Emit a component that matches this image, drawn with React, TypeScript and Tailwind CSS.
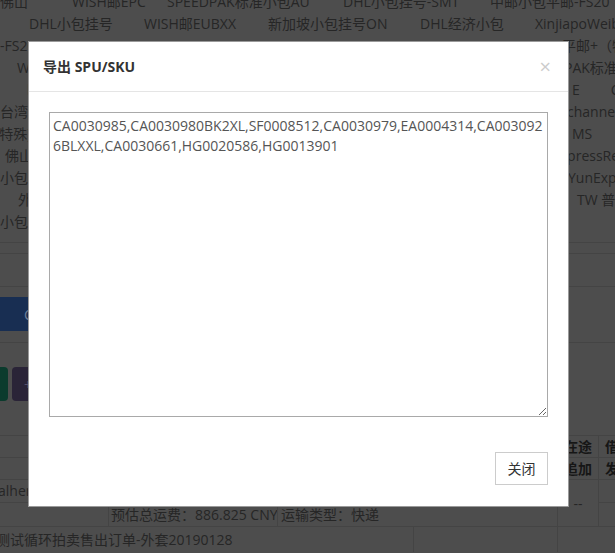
const skuList =
  "CA0030985,CA0030980BK2XL,SF0008512,CA0030979,EA0004314,CA0030926BLXXL,CA0030661,HG0020586,HG0013901";

function ChannelRows() {
  return (
    <div className="-mt-[9px] text-[14px] leading-[22px] whitespace-nowrap">
      <div className="flex h-[22px]">
        <span className="-ml-[28px] w-[100px] shrink-0">中邮佛山</span>
        <span className="w-[95px] shrink-0">WISH邮EPC</span>
        <span className="w-[176px] shrink-0">SPEEDPAK标准小包AU</span>
        <span className="w-[147px] shrink-0">DHL小包挂号-SMT</span>
        <span className="shrink-0">中邮小包平邮-FS20</span>
      </div>
      <div className="flex h-[22px] pl-[29px]">
        <span className="w-[115px] shrink-0">DHL小包挂号</span>
        <span className="w-[124px] shrink-0">WISH邮EUBXX</span>
        <span className="w-[152px] shrink-0">新加坡小包挂号ON</span>
        <span className="w-[115px] shrink-0">DHL经济小包</span>
        <span className="shrink-0">XinjiapoWeibao</span>
      </div>
      <div className="grid h-[22px] grid-cols-[560px_1fr]">
        <span className="-ml-[84px]">中邮小包平邮-FS20</span>
        <span className="ml-[2px]">平邮+（特殊）</span>
      </div>
      <div className="grid h-[22px] grid-cols-[560px_1fr]">
        <span className="ml-[17px]">WISH邮EUB</span>
        <span className="ml-[4px]">PAK标准小包</span>
      </div>
      <div className="grid h-[22px] grid-cols-[560px_1fr]">
        <span className="ml-[27px]">l</span>
        <span className="ml-[12px] flex gap-[31px]">
          <span className="shrink-0">E</span>
          <span className="shrink-0">CNE</span>
        </span>
      </div>
      <div className="grid h-[22px] grid-cols-[560px_1fr]">
        <span>台湾小包</span>
        <span className="ml-[7px]">channel</span>
      </div>
      <div className="grid h-[22px] grid-cols-[560px_1fr]">
        <span className="-ml-[5px]">(特殊)</span>
        <span className="ml-[12px]">MS</span>
      </div>
      <div className="grid h-[22px] grid-cols-[560px_1fr]">
        <span className="ml-[5px]">佛山</span>
        <span className="-ml-[8px]">ExpressReg</span>
      </div>
      <div className="grid h-[22px] grid-cols-[560px_1fr]">
        <span>小包</span>
        <span className="ml-[8px]">YunExpress</span>
      </div>
      <div className="grid h-[22px] grid-cols-[560px_1fr]">
        <span className="ml-[18px]">外</span>
        <span className="ml-[17px]">TW 普通</span>
      </div>
      <div className="flex h-[22px]">
        <span>小包</span>
      </div>
    </div>
  );
}

function OrderTable() {
  return (
    <div className="text-[14px] whitespace-nowrap">
      <div className="flex h-[22px] border-t border-[#444]">
        <div className="w-[557px] shrink-0" />
        <div className="flex w-[41px] shrink-0 items-center justify-center border-l border-[#444] font-bold text-[#161616]">在途</div>
        <div className="flex w-[60px] shrink-0 items-center border-l border-[#444] pl-[6px] font-bold text-[#161616]">借记</div>
      </div>
      <div className="flex h-[22px] border-t border-[#444]">
        <div className="w-[557px] shrink-0" />
        <div className="flex w-[41px] shrink-0 items-center justify-center border-l border-[#444] font-bold text-[#161616]">追加</div>
        <div className="flex w-[60px] shrink-0 items-center border-l border-[#444] pl-[6px] font-bold text-[#161616]">发货</div>
      </div>
      <div className="flex h-[47px] border-t border-[#444]">
        <div className="flex w-[557px] shrink-0 flex-col">
          <div className="flex h-[22px] items-center -ml-[2px]">alhere@qq.com</div>
          <div className="flex h-[25px] border-t border-[#444]">
            <div className="w-[108px] shrink-0" />
            <div className="flex w-[169px] shrink-0 items-center border-l border-[#444] pl-[2px]">预估总运费：886.825 CNY</div>
            <div className="flex flex-1 items-center border-l border-[#444] pl-[3px]">运输类型：快递</div>
          </div>
        </div>
        <div className="flex w-[41px] shrink-0 items-center justify-center border-l border-[#444]">--</div>
        <div className="flex w-[60px] shrink-0 flex-col border-l border-[#444]">
          <div className="h-[22px]" />
          <div className="flex-1 border-t border-[#444]" />
        </div>
      </div>
      <div className="flex h-[26px] border-t border-[#444]">
        <div className="flex w-[417px] shrink-0 items-center -ml-[4px]">测试循环拍卖售出订单-外套20190128</div>
        <div className="w-[144px] shrink-0 border-l border-[#444]" />
        <div className="w-[60px] shrink-0 border-l border-[#444]" />
      </div>
    </div>
  );
}

function ExportModal() {
  return (
    <div className="absolute left-[28px] top-[41px] flex w-[541px] flex-col border border-[#9a9a9a] bg-white">
      <div className="flex h-[50px] items-center justify-between border-b border-[#e5e5e5] pl-[14px] pr-[17px]">
        <h4 className="text-[14px] font-bold text-[#333]">导出 SPU/SKU</h4>
        <button className="text-[20px] leading-none text-[#cccccc]">×</button>
      </div>
      <div className="p-[20px]">
        <textarea
          readOnly
          defaultValue={skuList}
          className="block h-[305px] w-full border border-[#a9a9a9] p-[3px] text-[14px] leading-[20px] text-[#555] outline-none"
        />
      </div>
      <div className="flex justify-end px-[20px] pb-[21px] pt-[15px]">
        <button className="h-[33px] w-[53px] border border-[#cccccc] bg-white text-[14px] text-[#333]">关闭</button>
      </div>
    </div>
  );
}

export default function App() {
  return (
    <div className="relative h-[553px] w-full overflow-hidden bg-[#4d4d4d] font-['Open_Sans','Noto_Sans_CJK_SC',sans-serif] text-[#262626]">
      <ChannelRows />
      <div className="h-[9px]" />
      <div className="h-[11px] border-t border-[#444]" />
      <div className="h-[33px] border-t border-[#444]" />
      <div className="h-[56px] border-t border-[#444] pt-[10px]">
        <div className="flex h-[34px] w-[90px] items-center rounded-r-[4px] bg-[#182e52] pl-[24px] text-[14px] text-[#6f7f99]">
          Create
        </div>
      </div>
      <div className="flex h-[93px] gap-[4px] border-t border-[#444] pt-[24px]">
        <div className="h-[34px] w-[8px] rounded-r-[4px] bg-[#0b3b2d]" />
        <div className="flex h-[34px] w-[70px] items-center rounded-[4px] bg-[#2a2437] pl-[12px] text-[14px] text-[#55506a]">
          +
        </div>
      </div>
      <OrderTable />
      <ExportModal />
    </div>
  );
}
